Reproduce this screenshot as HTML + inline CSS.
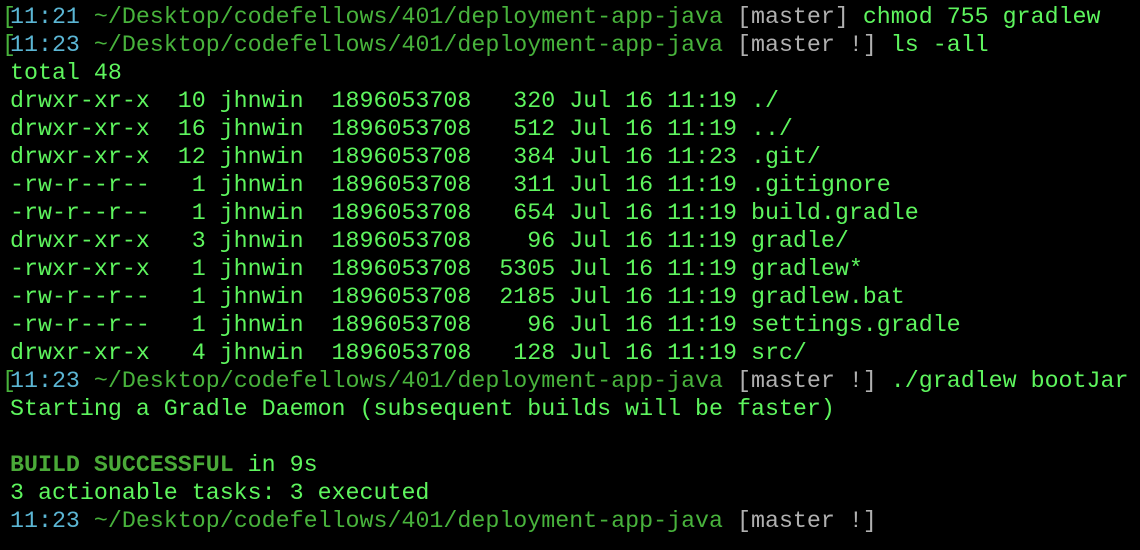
<!DOCTYPE html>
<html><head><style>
html,body{margin:0;padding:0;background:#000;width:1140px;height:550px;overflow:hidden}
pre{margin:0;position:absolute;left:10px;top:3px;font-family:"Liberation Mono",monospace;font-size:23.3px;line-height:28px;color:#5ef55e;white-space:pre}
.t{color:#5bb6d4}.p{color:#48b33c}.m{color:#b0b0b0}.b{color:#4aaa38;font-weight:bold}
.br{color:#48b33c;margin-left:-8px;display:inline-block;width:8px;overflow:visible}
</style></head><body>
<pre><span class="br">[</span><span class="t">11:21</span> <span class="p">~/Desktop/codefellows/401/deployment-app-java</span> <span class="m">[master]</span> chmod 755 gradlew
<span class="br">[</span><span class="t">11:23</span> <span class="p">~/Desktop/codefellows/401/deployment-app-java</span> <span class="m">[master !]</span> ls -all
total 48
drwxr-xr-x  10 jhnwin  1896053708   320 Jul 16 11:19 ./
drwxr-xr-x  16 jhnwin  1896053708   512 Jul 16 11:19 ../
drwxr-xr-x  12 jhnwin  1896053708   384 Jul 16 11:23 .git/
-rw-r--r--   1 jhnwin  1896053708   311 Jul 16 11:19 .gitignore
-rw-r--r--   1 jhnwin  1896053708   654 Jul 16 11:19 build.gradle
drwxr-xr-x   3 jhnwin  1896053708    96 Jul 16 11:19 gradle/
-rwxr-xr-x   1 jhnwin  1896053708  5305 Jul 16 11:19 gradlew*
-rw-r--r--   1 jhnwin  1896053708  2185 Jul 16 11:19 gradlew.bat
-rw-r--r--   1 jhnwin  1896053708    96 Jul 16 11:19 settings.gradle
drwxr-xr-x   4 jhnwin  1896053708   128 Jul 16 11:19 src/
<span class="br">[</span><span class="t">11:23</span> <span class="p">~/Desktop/codefellows/401/deployment-app-java</span> <span class="m">[master !]</span> ./gradlew bootJar
Starting a Gradle Daemon (subsequent builds will be faster)

<span class="b">BUILD SUCCESSFUL</span> in 9s
3 actionable tasks: 3 executed
<span class="t">11:23</span> <span class="p">~/Desktop/codefellows/401/deployment-app-java</span> <span class="m">[master !]</span></pre>
</body></html>
